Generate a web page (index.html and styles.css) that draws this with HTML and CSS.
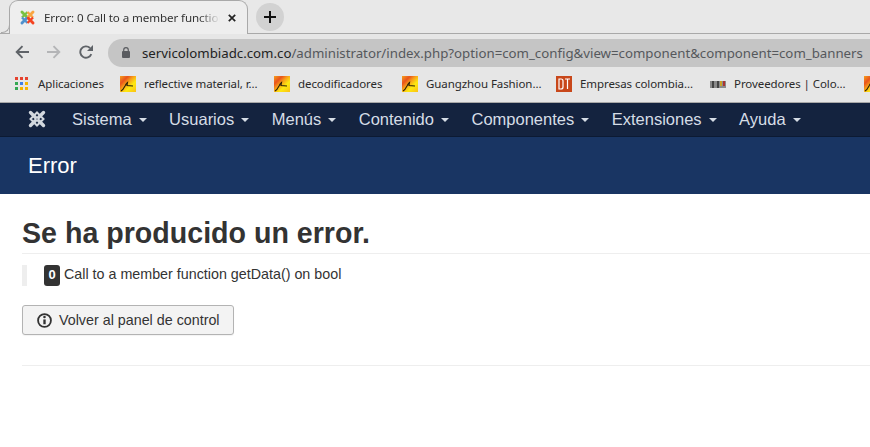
FILE: index.html
```html
<!DOCTYPE html>
<html lang="es">
<head>
<meta charset="utf-8">
<title>Error: 0 Call to a member function getData() on bool</title>
<link rel="stylesheet" href="styles.css">
</head>
<body>
<svg class="defs" width="0" height="0" aria-hidden="true">
  <defs>
    <linearGradient id="favgrad" x1="0" y1="0" x2="1" y2="1">
      <stop offset="0" stop-color="#f6a21c"/>
      <stop offset=".26" stop-color="#e9531c"/>
      <stop offset=".44" stop-color="#f8a01a"/>
      <stop offset=".66" stop-color="#fde910"/>
      <stop offset="1" stop-color="#fbc014"/>
    </linearGradient>
    <symbol id="fav" viewBox="0 0 16 16">
      <rect width="16" height="16" fill="url(#favgrad)"/>
      <path d="M1 15c2-1 3-3 4-5 .6-1.500 1.300-2.500 2.500-3.500L7 9.500l6 .5" fill="none" stroke="#2c2208" stroke-width="1.100"/>
    </symbol>
  </defs>
</svg>

<header class="chrome">
  <div class="tabstrip">
    <div class="tab">
      <svg class="tab-fav" width="17" height="17" viewBox="0 0 20 20">
        <g fill="none" stroke-width="2.600">
          <path stroke="#7ac143" d="M10 3.500L3.500 10"/>
          <path stroke="#f9a541" d="M10 3.500L16.500 10"/>
          <path stroke="#5091cd" d="M10 16.500L3.500 10"/>
          <path stroke="#f44321" d="M10 16.500L16.500 10"/>
        </g>
        <g fill="none" stroke-width="3.400" stroke-linecap="round">
          <path stroke="#7ac143" d="M3.500 3.500L9 9"/>
          <path stroke="#f9a541" d="M16.500 3.500L11 9"/>
          <path stroke="#5091cd" d="M3.500 16.500L9 11"/>
          <path stroke="#f44321" d="M16.500 16.500L11 11"/>
        </g>
      </svg>
      <span class="tab-title">Error: 0 Call to a member function getData() on bool</span>
      <svg class="tab-close" width="8" height="8" viewBox="0 0 8 8"><path d="M.8.8l6.400 6.400M7.200.8L.8 7.200" stroke="#222" stroke-width="1.700" fill="none"/></svg>
    </div>
    <div class="newtab">
      <svg width="12" height="12" viewBox="0 0 12 12"><path d="M6 0v12M0 6h12" stroke="#111" stroke-width="2" fill="none"/></svg>
    </div>
  </div>
  <div class="toolbar">
    <svg class="nav-ico" width="14" height="14" viewBox="0 0 14 14"><path d="M14 7H2M7.500 1.200L1.700 7l5.800 5.800" stroke="#5f6368" stroke-width="1.900" fill="none"/></svg>
    <svg class="nav-ico" width="14" height="14" viewBox="0 0 14 14"><path d="M0 7h12M6.500 1.200L12.300 7l-5.800 5.800" stroke="#b4b5b7" stroke-width="1.900" fill="none"/></svg>
    <svg class="nav-ico" width="14" height="14" viewBox="0 0 14 14"><path d="M12.300 9.200A5.700 5.700 0 1 1 11 3" stroke="#5f6368" stroke-width="1.900" fill="none"/><path d="M14 0v6H8z" fill="#5f6368"/></svg>
    <div class="omnibox">
      <svg class="lock" width="8" height="11" viewBox="0 0 8 11"><path d="M1.700 5V3a2.300 2.300 0 0 1 4.600 0v2" stroke="#5a5c60" stroke-width="1.200" fill="none"/><rect y="4" width="8" height="7" rx="1" fill="#5a5c60"/></svg>
      <span class="url"><span class="host">servicolombiadc.com.co</span>/administrator/index.php?option=com_config&amp;view=component&amp;component=com_banners</span>
    </div>
  </div>
  <div class="bookmarks">
    <div class="bm bm-apps">
      <span class="apps">
        <i class="r"></i><i class="r"></i><i class="r"></i>
        <i class="g"></i><i class="b"></i><i class="y"></i>
        <i class="g"></i><i class="y"></i><i class="y"></i>
      </span>
      <span>Aplicaciones</span>
    </div>
    <div class="bm bm-a"><svg class="ico"><use href="#fav"/></svg><span>reflective material, r...</span></div>
    <div class="bm bm-b"><svg class="ico"><use href="#fav"/></svg><span>decodificadores</span></div>
    <div class="bm bm-c"><svg class="ico"><use href="#fav"/></svg><span>Guangzhou Fashion...</span></div>
    <div class="bm bm-d">
      <svg class="ico" viewBox="0 0 16 16"><rect width="16" height="16" fill="#c8471a"/><path d="M3 3h2c1.500 0 2 1 2 2v6c0 1-.5 2-2 2H3zM9 3h5M11.500 3v10" stroke="#fff" stroke-width="1.200" fill="none"/></svg>
      <span>Empresas colombia...</span>
    </div>
    <div class="bm bm-e">
      <svg class="ico" viewBox="0 0 16 16"><path d="M0 5h16v7H0z" fill="#8a8a8a"/><path d="M2 5h2v7H2zM7 5h2v7H7z" fill="#444"/><path d="M10 5h2v5h-2z" fill="#c9a227"/><path d="M13 5h2v5h-2z" fill="#a33"/></svg>
      <span>Proveedores | Colo...</span>
    </div>
    <div class="bm"><svg class="ico"><use href="#fav"/></svg></div>
  </div>
</header>

<nav class="navbar">
  <svg class="brand" width="20" height="20" viewBox="0 0 20 20">
    <g fill="none" stroke="#d3d8de">
      <path stroke-width="2" d="M10 3.500L16.500 10 10 16.500 3.500 10z"/>
      <path stroke-width="3.400" stroke-linecap="round" d="M3.500 3.500L8.500 8.500M16.500 3.500L11.500 8.500M3.500 16.500L8.500 11.500M16.500 16.500L11.500 11.500"/>
    </g>
  </svg>
  <ul class="menu">
    <li>Sistema<b class="caret"></b></li>
    <li>Usuarios<b class="caret"></b></li>
    <li>Menús<b class="caret"></b></li>
    <li>Contenido<b class="caret"></b></li>
    <li>Componentes<b class="caret"></b></li>
    <li>Extensiones<b class="caret"></b></li>
    <li>Ayuda<b class="caret"></b></li>
  </ul>
</nav>

<div class="subhead"><h1>Error</h1></div>

<main class="content">
  <h2>Se ha producido un error.</h2>
  <blockquote class="quote"><span class="badge">0</span> Call to a member function getData() on bool</blockquote>
  <a class="btn" href="#">
    <svg width="15" height="15" viewBox="0 0 14 14"><circle cx="7" cy="7" r="6" stroke="#333" stroke-width="1.700" fill="none"/><path d="M7 6v4.500" stroke="#333" stroke-width="2.200"/><circle cx="7" cy="3.800" r="1.200" fill="#333"/></svg>
    <span>Volver al panel de control</span>
  </a>
  <hr class="rule">
</main>
</body>
</html>
```

FILE: styles.css
```css
* { box-sizing: border-box; }
html, body { margin: 0; height: 447px; overflow: hidden; background: #fff; }
body { font-family: "Liberation Sans", Arial, sans-serif; color: #333; }
.defs { position: absolute; }

.chrome { height: 103px; background: #e6e6e6; font-family: "Noto Sans", "Open Sans", sans-serif; border-bottom: 1px solid #a8a8a8; }
.tabstrip { height: 34px; display: flex; align-items: flex-start; padding-left: 9px; border-bottom: 1px solid #a9a9a9; background: #e8e8e8; }
.tab { width: 239px; height: 34px; display: flex; align-items: center; padding: 0 11px 0 9px; background: #eeeeee; border: 1px solid #a9a9a9; border-bottom: 0; border-radius: 9px 9px 0 0; position: relative; }
.tab::before { content: ""; position: absolute; left: -9px; bottom: 1px; width: 8px; height: 8px; border: solid #a9a9a9; border-width: 0 1px 1px 0; border-radius: 0 0 8px 0; }
.tab-fav { flex: none; margin-right: 8px; }
.tab-title { flex: 1; min-width: 0; font-size: 11.6px; letter-spacing: -.1px; white-space: nowrap; overflow: hidden; color: #333; -webkit-mask-image: linear-gradient(to right, #000 88%, transparent 100%); mask-image: linear-gradient(to right, #000 88%, transparent 100%); }
.tab-close { flex: none; margin-left: 8px; }
.newtab { width: 28px; height: 28px; margin: 3px 0 0 8px; border-radius: 50%; background: #d2d2d2; display: flex; align-items: center; justify-content: center; }

.toolbar { height: 33px; display: flex; align-items: center; padding: 0 0 0 15px; }
.nav-ico { flex: none; margin-right: 18px; margin-top: 3px; }
.nav-ico:nth-child(3) { margin-right: 15px; }
.omnibox { flex: 1; height: 28px; margin-top: 4px; display: flex; align-items: center; padding-left: 14px; background: #c5c5c5; border-radius: 14px 0 0 14px; min-width: 0; overflow: hidden; }
.lock { flex: none; margin-right: 12px; }
.url { font-size: 13.26px; color: #55585c; white-space: nowrap; }
.host { color: #222; }

.bookmarks { height: 35px; display: flex; align-items: center; padding: 0 0 2px 15px; font-size: 11.5px; letter-spacing: -.08px; color: #2a2a2a; white-space: nowrap; overflow: hidden; }
.bm { display: flex; align-items: center; flex: none; }
.ico { width: 16px; height: 16px; flex: none; margin-right: 8px; }
.apps { width: 14px; height: 14px; display: grid; grid-template-columns: repeat(3, 3px); column-gap: 2px; row-gap: 2px; margin-right: 9px; }
.apps i { display: block; width: 3px; height: 3px; }
.apps .r { background: #e5432f; }
.apps .b { background: #3f7fe8; }
.apps .g { background: #35a853; }
.apps .y { background: #f5b400; }
.bm-apps { width: 105px; }
.bm-a { width: 154px; }
.bm-b { width: 128px; }
.bm-c { width: 154px; }
.bm-d { width: 154px; }
.bm-e { width: 154px; }

.navbar { height: 34px; background: #14233f; border-bottom: 1px solid #0c1a33; display: flex; align-items: center; padding: 0 0 2px 27px; color: #d6dde6; }
.brand { flex: none; margin-right: 25px; }
.menu { list-style: none; margin: 0; padding: 0; display: flex; gap: 22.5px; font-size: 16.5px; white-space: nowrap; }
.menu li { display: flex; align-items: center; line-height: 20px; }
.caret { margin-left: 7px; margin-top: 2px; width: 0; height: 0; border: 4px solid transparent; border-top-color: #d6dde6; border-bottom: 0; }

.subhead { height: 57px; background: #193563; display: flex; align-items: center; padding-left: 28px; }
.subhead h1 { margin: 0; font-size: 22px; font-weight: 400; color: #fff; line-height: 1; }

.content { padding: 21px 0 0 22px; }
.content h2 { margin: 0; height: 39px; font-size: 28.6px; line-height: 36px; font-weight: 700; color: #333; border-bottom: 1px solid #eee; }
.quote { margin: 11px 0 0; height: 21px; border-left: 5px solid #eee; padding-left: 17px; font-size: 14.3px; line-height: 18px; color: #333; }
.badge { display: inline-block; width: 16px; height: 21px; background: #333; color: #fff; border-radius: 3px; font-size: 13px; font-weight: 700; line-height: 19px; text-align: center; vertical-align: top; }
.btn { margin-top: 19px; width: 212px; height: 30px; display: flex; align-items: center; padding-left: 14px; gap: 7px; font-size: 14.3px; color: #333; text-decoration: none; background: #f3f3f3; border: 1px solid #b3b3b3; border-radius: 3px; box-shadow: 0 1px 1px rgba(0,0,0,.05); }
.rule { margin: 30px 0 0; border: 0; border-top: 1px solid #eee; }
```
